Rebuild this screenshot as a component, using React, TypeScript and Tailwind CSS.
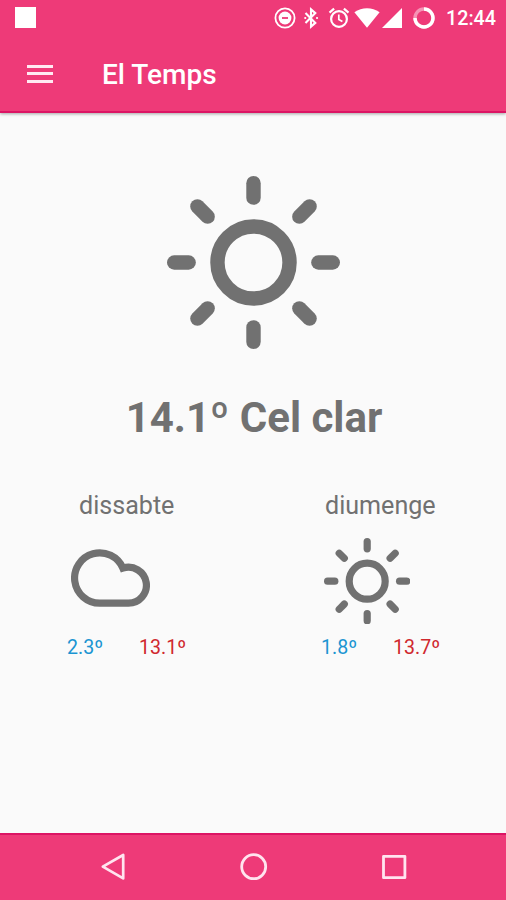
import React from 'react';

interface IconProps {
  className?: string;
}

interface Day {
  name: string;
  min: string;
  max: string;
  icon: React.ReactNode;
  nameClass: string;
  tempsClass: string;
}

const rays = [0, 45, 90, 135, 180, 225, 270, 315];

function SunIcon({ className }: IconProps) {
  return (
    <svg viewBox="0 0 24 24" className={className} fill="none" stroke="currentColor" strokeWidth="2" strokeLinecap="round">
      <circle cx="12" cy="12" r="5" />
      {rays.map((angle) => (
        <path key={angle} d="M12 1v2" transform={`rotate(${angle} 12 12)`} />
      ))}
    </svg>
  );
}

function CloudIcon({ className }: IconProps) {
  return (
    <svg viewBox="0 0 22 16" className={className} fill="none" stroke="currentColor" strokeWidth="2">
      <path d="M14.437 5.25A7 7 0 1 0 8 15h8a5 5 0 1 0-1.563-9.75z" />
    </svg>
  );
}

function StatusBar() {
  return (
    <div className="flex h-[35px] items-center text-white">
      <div className="ml-[15px] h-[21px] w-[21px] bg-white" />
      <svg viewBox="0 0 22 22" className="ml-[238px] h-[22px] w-[22px]" fill="none">
        <circle cx="11" cy="11" r="9.6" stroke="#fff" strokeWidth="1.8" />
        <circle cx="11" cy="11" r="6.4" fill="#fff" />
        <path d="M8 11h6" stroke="#ee3a78" strokeWidth="1.8" />
      </svg>
      <svg viewBox="0 0 16 22" className="ml-[7px] h-[22px] w-4" fill="none" stroke="#fff" strokeWidth="2.1">
        <path d="M2.5 6.1l9.8 9.8L8 19.6V2.4l4.3 3.7-9.8 9.8" />
        <path d="M2.2 11h.1M14 11h.1" strokeLinecap="round" />
      </svg>
      <svg viewBox="0 0 22 22" className="ml-[9px] h-[22px] w-[22px]" fill="none" stroke="#fff" strokeWidth="2.2">
        <circle cx="11" cy="12" r="7.9" />
        <path d="M1.5 5.6l4.6-3.9M20.5 5.6l-4.6-3.9" />
        <path d="M10.8 7.4v5l3.6 2.2" strokeWidth="1.7" />
      </svg>
      <svg viewBox="0 0 26 20" className="ml-[4px] h-5 w-[26px]" fill="#fff">
        <path d="M13 19.8L.4 4.2C8-1.1 18-1.1 25.6 4.2z" />
      </svg>
      <svg viewBox="0 0 20 20" className="ml-[2px] h-5 w-5" fill="#fff">
        <path d="M20 0v20H0z" />
      </svg>
      <svg viewBox="0 0 22 22" className="ml-[11px] h-[22px] w-[22px]" fill="none" stroke="#fff" strokeWidth="3.4">
        <circle cx="11" cy="11" r="9" strokeOpacity=".45" />
        <path d="M11 2a9 9 0 1 1-9 9" />
      </svg>
      <span className="mt-0.5 ml-[11px] text-[19.7px] font-medium leading-none">12:44</span>
    </div>
  );
}

function AppBar() {
  return (
    <header className="h-[113px] border-b-2 border-[#dc1464] bg-[#ee3a78] shadow-[0_1px_3px_rgba(0,0,0,0.35)]">
      <StatusBar />
      <div className="flex h-[77px] items-center">
        <div className="ml-[27px] flex w-[26px] flex-col gap-[4.5px]">
          <div className="h-[3px] bg-[#ffe9f2]" />
          <div className="h-[3px] bg-[#ffe9f2]" />
          <div className="h-[3px] bg-[#ffe9f2]" />
        </div>
        <h1 className="mt-0.5 ml-[49px] text-[28px] font-medium leading-none text-white">El Temps</h1>
      </div>
    </header>
  );
}

const days: Day[] = [
  {
    name: 'dissabte',
    min: '2.3º',
    max: '13.1º',
    icon: <CloudIcon className="mt-[11px] ml-[71px] h-[58px] w-[79px]" />,
    nameClass: 'ml-[79px]',
    tempsClass: 'ml-[67px]',
  },
  {
    name: 'diumenge',
    min: '1.8º',
    max: '13.7º',
    icon: <SunIcon className="ml-[71px] h-[86.4px] w-[86.4px]" />,
    nameClass: 'ml-[72px]',
    tempsClass: 'ml-[68px]',
  },
];

function Forecast({ day }: { day: Day }) {
  return (
    <div className="w-[253px]">
      <p className={`text-[25.1px] leading-[30px] ${day.nameClass}`}>{day.name}</p>
      <div className="mt-[17px] flex h-[87px] items-start">{day.icon}</div>
      <div className={`mt-[11px] flex text-[19.6px] leading-6 ${day.tempsClass}`}>
        <span className="w-[72px] text-[#1b95d2]">{day.min}</span>
        <span className="text-[#d0282e]">{day.max}</span>
      </div>
    </div>
  );
}

function NavBar() {
  return (
    <nav className="flex h-[67px] items-center border-t-2 border-[#dc1464] bg-[#ee3a78] pb-0.5">
      <svg viewBox="0 0 28 28" className="ml-[100px] h-7 w-7" fill="none" stroke="#ffe4ef" strokeWidth="2.7" strokeLinejoin="round">
        <path d="M2.8 13.7L23.2 2v23.4z" />
      </svg>
      <svg viewBox="0 0 28 28" className="ml-[112px] h-7 w-7" fill="none" stroke="#ffe4ef" strokeWidth="2.8">
        <circle cx="13.7" cy="13.7" r="12" />
      </svg>
      <svg viewBox="0 0 28 28" className="ml-[112px] h-7 w-7" fill="none" stroke="#ffe4ef" strokeWidth="2.8" strokeLinejoin="round">
        <path d="M3.5 3.3h21.4v21.4H3.5z" />
      </svg>
    </nav>
  );
}

export default function App() {
  return (
    <div className="flex h-[900px] w-[506px] flex-col overflow-hidden bg-[#fafafa] font-['Roboto',sans-serif] text-[#717171]">
      <AppBar />
      <main className="flex-1">
        <SunIcon className="mt-[63px] ml-[167px] h-[173px] w-[173px]" />
        <p className="mt-[44px] ml-0.5 text-center text-[42px] font-bold leading-[50px]">14.1º Cel clar</p>
        <div className="mt-[48px] flex">
          {days.map((day) => (
            <Forecast key={day.name} day={day} />
          ))}
        </div>
      </main>
      <NavBar />
    </div>
  );
}
